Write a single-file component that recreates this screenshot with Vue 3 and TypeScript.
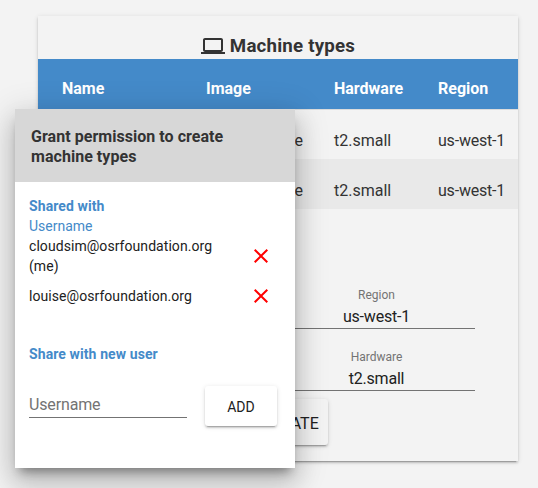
<script setup lang="ts">
interface Machine {
  id: number
  image: string
  hardware: string
  region: string
}

interface Field {
  label: string
  value: string
}

const columns: string[] = ['Name', 'Image', 'Hardware', 'Region']

const machines: Machine[] = [
  { id: 1, image: 'image', hardware: 't2.small', region: 'us-west-1' },
  { id: 2, image: 'image', hardware: 't2.small', region: 'us-west-1' },
]

const fields: Field[] = [
  { label: 'Region', value: 'us-west-1' },
  { label: 'Hardware', value: 't2.small' },
]

const users: string[] = ['cloudsim@osrfoundation.org (me)', 'louise@osrfoundation.org']
</script>

<template>
  <main class="page">
    <section class="card">
      <h1 class="title">
        <svg class="laptop" viewBox="0 0 24 24">
          <path d="M20 18c1.100 0 1.990-.9 1.990-2L22 6c0-1.100-.9-2-2-2H4c-1.100 0-2 .9-2 2v10c0 1.100.9 2 2 2H0v2h24v-2h-4zM4 6h16v10H4V6z" />
        </svg>
        <span>Machine types</span>
      </h1>
      <div class="row head">
        <span v-for="column in columns" :key="column">{{ column }}</span>
      </div>
      <div v-for="machine in machines" :key="machine.id" class="row">
        <span></span>
        <span class="image">{{ machine.image }}</span>
        <span>{{ machine.hardware }}</span>
        <span class="region">{{ machine.region }}</span>
      </div>
      <div class="form">
        <label v-for="field in fields" :key="field.label" class="field">
          <span class="label">{{ field.label }}</span>
          <span class="value">{{ field.value }}</span>
        </label>
      </div>
      <button class="button create">CREATE</button>
    </section>

    <aside class="dialog">
      <h2 class="dialog-title">Grant permission to create machine types</h2>
      <div class="dialog-body">
        <h3 class="section">Shared with</h3>
        <div class="caption">Username</div>
        <div v-for="user in users" :key="user" class="user">
          <span class="user-name">{{ user }}</span>
          <svg class="remove" viewBox="0 0 24 24">
            <path d="M19 6.410L17.590 5 12 10.590 6.410 5 5 6.410 10.590 12 5 17.590 6.410 19 12 13.410 17.590 19 19 17.590 13.410 12z" />
          </svg>
        </div>
        <h3 class="section new-user">Share with new user</h3>
        <div class="add-row">
          <input class="input" placeholder="Username" />
          <button class="button add">ADD</button>
        </div>
      </div>
    </aside>
  </main>
</template>

<style>
body {
  margin: 0;
  background: #f3f3f3;
}
</style>

<style scoped>
.page {
  position: relative;
  box-sizing: border-box;
  height: 488px;
  padding: 16px 20px 27px 38px;
  overflow: hidden;
  background: #f3f3f3;
  color: #333;
  font: 16px/20px Roboto, sans-serif;
}
.card {
  display: flex;
  flex-direction: column;
  height: 445px;
  box-shadow: 0 2px 2px 0 rgba(0, 0, 0, 0.14), 0 1px 5px 0 rgba(0, 0, 0, 0.12),
    0 3px 1px -2px rgba(0, 0, 0, 0.2);
}
.title {
  display: flex;
  justify-content: center;
  align-items: center;
  gap: 5px;
  box-sizing: border-box;
  height: 43px;
  margin: 0;
  padding-top: 17px;
  font-size: 18.720px;
  letter-spacing: 0.2px;
  font-weight: 700;
}
.laptop {
  width: 24px;
  height: 24px;
  fill: #333;
}
.row {
  display: grid;
  grid-template-columns: 144px 128px 104px 1fr;
  align-items: center;
  box-sizing: border-box;
  height: 50px;
  padding: 13px 0 0 24px;
}
.row.head {
  background: #448ac9;
  color: #fff;
  font-weight: 700;
  padding-top: 9px;
}
.head + .row {
  border-top: 1px solid #dcdcdc;
}
.row:nth-child(4) {
  background: #e9e9e9;
}
.image {
  width: 97px;
  text-align: right;
}
.region {
  letter-spacing: -0.2px;
}
.form {
  display: flex;
  flex-direction: column;
  width: 197px;
  margin: 70px 0 0 240px;
}
.field {
  display: flex;
  flex-direction: column;
  box-sizing: border-box;
  height: 62px;
  padding-top: 6px;
  text-align: center;
}
.label {
  font-size: 12px;
  color: #737373;
}
.value {
  height: 23px;
  line-height: 24px;
  border-bottom: 1px solid #737373;
  color: #212121;
  letter-spacing: -0.2px;
}
.button {
  box-sizing: border-box;
  border: 0;
  border-radius: 3px;
  font-family: Roboto, sans-serif;
  color: #212121;
  box-shadow: 0 2px 2px 0 rgba(0, 0, 0, 0.14), 0 1px 5px 0 rgba(0, 0, 0, 0.12),
    0 3px 1px -2px rgba(0, 0, 0, 0.2);
}
.create {
  width: 76px;
  height: 46px;
  margin: -4px 0 0 214px;
  padding: 3px 0 0;
  background: #f3f3f3;
  font-size: 16px;
}
.dialog {
  position: absolute;
  left: 15px;
  top: 109px;
  width: 280px;
  height: 359px;
  background: #fff;
  color: #212121;
  font-size: 14px;
  box-shadow: 0 16px 24px 2px rgba(0, 0, 0, 0.14), 0 6px 30px 5px rgba(0, 0, 0, 0.12),
    0 8px 10px -5px rgba(0, 0, 0, 0.4);
}
.dialog-title {
  box-sizing: border-box;
  height: 73px;
  margin: 0;
  padding: 18px 40px 0 16px;
  background: #d7d7d7;
  color: #333;
  font-size: 16px;
  line-height: 20px;
  font-weight: 700;
  letter-spacing: 0.04px;
}
.dialog-body {
  padding: 14px 14px 0;
}
.section {
  margin: 0;
  font-size: 14px;
  line-height: 20px;
  font-weight: 700;
  letter-spacing: 0.1px;
  color: #448ac9;
}
.caption {
  color: #448ac9;
}
.user {
  display: flex;
  align-items: center;
  min-height: 40px;
}
.user-name {
  width: 200px;
  margin-right: 20px;
  letter-spacing: 0.06px;
}
.remove {
  width: 24px;
  height: 24px;
  fill: #f00;
}
.new-user {
  margin-top: 28px;
}
.add-row {
  display: flex;
  justify-content: space-between;
  align-items: flex-end;
  height: 62px;
  padding-right: 4px;
}
.input {
  box-sizing: border-box;
  width: 158px;
  height: 25px;
  margin-bottom: 8px;
  padding: 0 0 2px;
  border: 0;
  border-bottom: 1px solid #737373;
  background: transparent;
  font: 16px/22px Roboto, sans-serif;
  letter-spacing: -0.150px;
}
.input::placeholder {
  color: #737373;
}
.add {
  width: 72px;
  height: 40px;
  padding: 2px 0 0;
  background: #fff;
  font-size: 14px;
}
</style>
